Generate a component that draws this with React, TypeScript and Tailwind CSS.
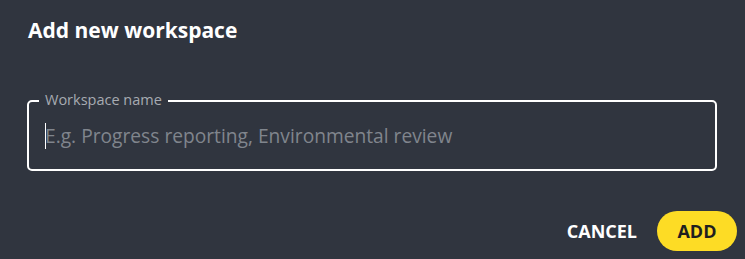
export default function App() {
  const font = { fontFamily: "'Open Sans', 'Noto Sans', sans-serif" };
  return (
    <div className="w-[745px] h-[259px] bg-[#30353f] flex flex-col" style={font}>
      <h1 className="pl-[28px] pt-[15px] text-[21px] leading-[30px] font-bold text-white">
        Add new workspace
      </h1>
      <div className="mt-[55px] pl-[27px] pr-[28px]">
        <div className="relative border-2 border-white rounded-[5px] h-[71px] flex items-center pl-[16px] pt-[2px]">
          <span className="absolute -top-[11px] left-[10px] px-[6px] bg-[#30353f] text-[14.5px] leading-[18px] text-[#a7abb2]">
            Workspace name
          </span>
          <span className="absolute left-[16px] top-[21px] w-[1px] h-[26px] bg-white" />
          <input
            className="w-full bg-transparent outline-none text-[19.2px] text-white placeholder:text-[#80858d]"
            placeholder="E.g. Progress reporting, Environmental review"
            style={font}
          />
        </div>
      </div>
      <div className="mt-auto pb-[8px] pr-[8px] flex items-center justify-end gap-[20px]">
        <button className="text-[18px] font-bold text-white">CANCEL</button>
        <button className="w-[80px] h-[40px] rounded-full bg-[#fddc25] text-[18px] font-bold text-[#1f1f1f]">
          ADD
        </button>
      </div>
    </div>
  );
}
